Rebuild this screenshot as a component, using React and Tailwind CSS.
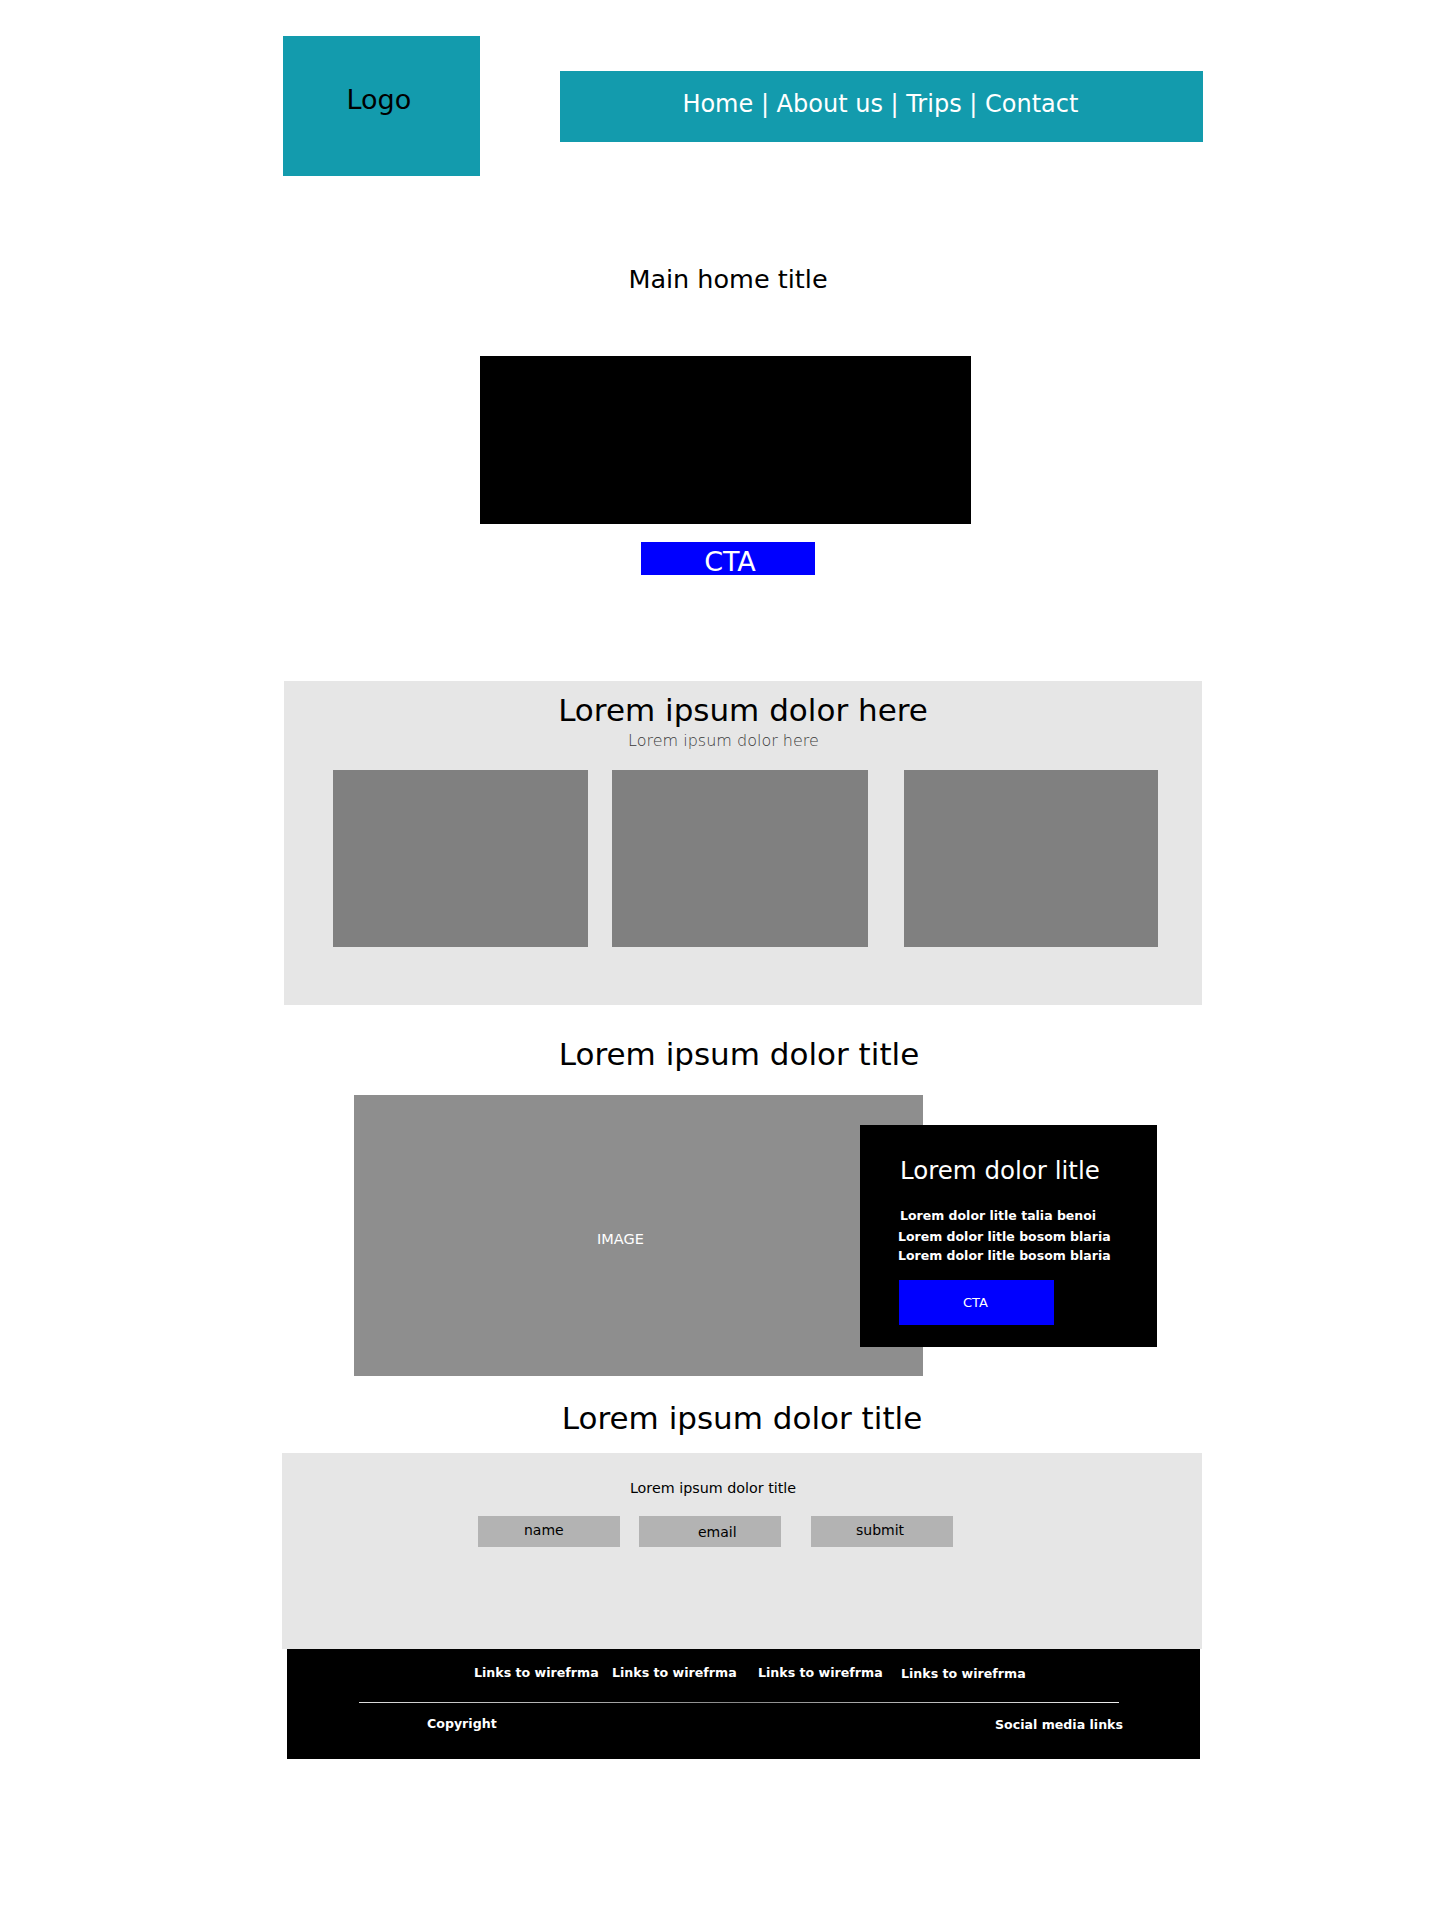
export default function App() {
  const font = { fontFamily: '"DejaVu Sans", "Liberation Sans", sans-serif' };
  return (
    <div className="min-h-[1920px] bg-white text-black" style={font}>
      <div className="ml-[283px] w-[920px] pt-[36px] flex flex-col">
        {/* Header */}
        <div className="flex items-start">
          <div className="w-[197px] h-[140px] bg-[#139bad] flex items-center justify-center pb-[12px]">
            <span className="text-[27px] leading-[32px] mr-[5px]">Logo</span>
          </div>
          <div className="ml-[80px] mt-[35px] w-[644px] h-[71px] bg-[#139bad] flex items-center justify-center pb-[5px]">
            <span className="text-[24px] leading-[30px] text-white ml-[-2px]">Home | About us | Trips | Contact</span>
          </div>
        </div>

        {/* Hero */}
        <div className="mt-[88px] flex flex-col items-center">
          <h1 className="ml-[-30px] text-[25.5px] leading-[30px] font-normal">Main home title</h1>
          <div className="mt-[62px] ml-[-35px] w-[491px] h-[168px] bg-black" />
          <button className="mt-[18px] ml-[-31px] w-[174px] h-[33px] bg-[#0000ff] text-white text-[27px] leading-[33px] pt-[3px] pl-[5px]">CTA</button>
        </div>

        {/* Gray cards section */}
        <div className="mt-[106px] ml-[1px] w-[918px] h-[324px] bg-[#e6e6e6] pt-[11px] flex flex-col">
          <h2 className="text-center text-[31px] leading-[36px] font-normal">Lorem ipsum dolor here</h2>
          <p className="text-center text-[16px] leading-[20px] mt-[3px] font-light text-[#3a3a3a] ml-[-39px]">Lorem ipsum dolor here</p>
          <div className="mt-[19px] flex">
            <div className="ml-[49px] w-[255px] h-[177px] bg-[#808080]" />
            <div className="ml-[24px] w-[256px] h-[177px] bg-[#808080]" />
            <div className="ml-[36px] w-[254px] h-[177px] bg-[#808080]" />
          </div>
        </div>

        {/* Feature */}
        <h2 className="mt-[31px] text-center text-[31px] leading-[36px] font-normal ml-[-8px]">Lorem ipsum dolor title</h2>
        <div className="relative mt-[23px] ml-[71px] w-[569px] h-[281px] bg-[#8e8e8e] flex items-center justify-center">
          <span className="text-white text-[14.5px] leading-[18px] ml-[-36px] mt-[6px]">IMAGE</span>
          <div className="absolute left-[506px] top-[30px] w-[297px] h-[222px] bg-black pt-[31px] pl-[40px] flex flex-col items-start">
            <h3 className="text-white text-[24.5px] leading-[30px] font-normal">Lorem dolor litle</h3>
            <div className="mt-[20px] text-white text-[12.5px] font-semibold">
              <p className="leading-[20px]">Lorem dolor litle talia benoi</p>
              <p className="leading-[20px] mt-[1px] ml-[-2px]">Lorem dolor litle bosom blaria</p>
              <p className="leading-[18px] ml-[-2px]">Lorem dolor litle bosom blaria</p>
            </div>
            <button className="mt-[15px] ml-[-1px] w-[155px] h-[45px] bg-[#0000ff] text-white text-[13px] leading-[45px] pr-[2px]">CTA</button>
          </div>
        </div>

        {/* Contact */}
        <h2 className="mt-[24px] text-center text-[31px] leading-[36px] font-normal ml-[-2px]">Lorem ipsum dolor title</h2>
        <div className="mt-[17px] ml-[-1px] w-[920px] h-[196px] bg-[#e6e6e6] pt-[25px] flex flex-col">
          <p className="text-center text-[14.3px] leading-[20px] ml-[-58px]">Lorem ipsum dolor title</p>
          <div className="mt-[18px] flex">
            <div className="ml-[196px] w-[142px] h-[31px] bg-[#b3b3b3] text-[14px] flex items-center pl-[46px] pb-[2px]">name</div>
            <div className="ml-[19px] w-[142px] h-[31px] bg-[#b3b3b3] text-[14px] flex items-center pl-[59px] pt-[1px]">email</div>
            <div className="ml-[30px] w-[142px] h-[31px] bg-[#b3b3b3] text-[14px] flex items-center pl-[45px] pb-[2px]">submit</div>
          </div>
        </div>

        {/* Footer */}
        <footer className="ml-[4px] w-[913px] h-[110px] bg-black pt-[14px] flex flex-col text-white text-[12.6px] font-semibold">
          <div className="flex leading-[20px] whitespace-nowrap">
            <span className="ml-[187px] w-[138px]">Links to wirefrma</span>
            <span className="w-[146px]">Links to wirefrma</span>
            <span className="w-[143px]">Links to wirefrma</span>
            <span className="mt-[1px]">Links to wirefrma</span>
          </div>
          <div className="mt-[18px] ml-[72px] w-[760px] h-px bg-gradient-to-r from-[#ddd] via-[#888] to-[#eee]" />
          <div className="mt-[11px] flex justify-between leading-[20px]">
            <span className="ml-[140px]">Copyright</span>
            <span className="mr-[77px] mt-[1px]">Social media links</span>
          </div>
        </footer>
      </div>
    </div>
  );
}
